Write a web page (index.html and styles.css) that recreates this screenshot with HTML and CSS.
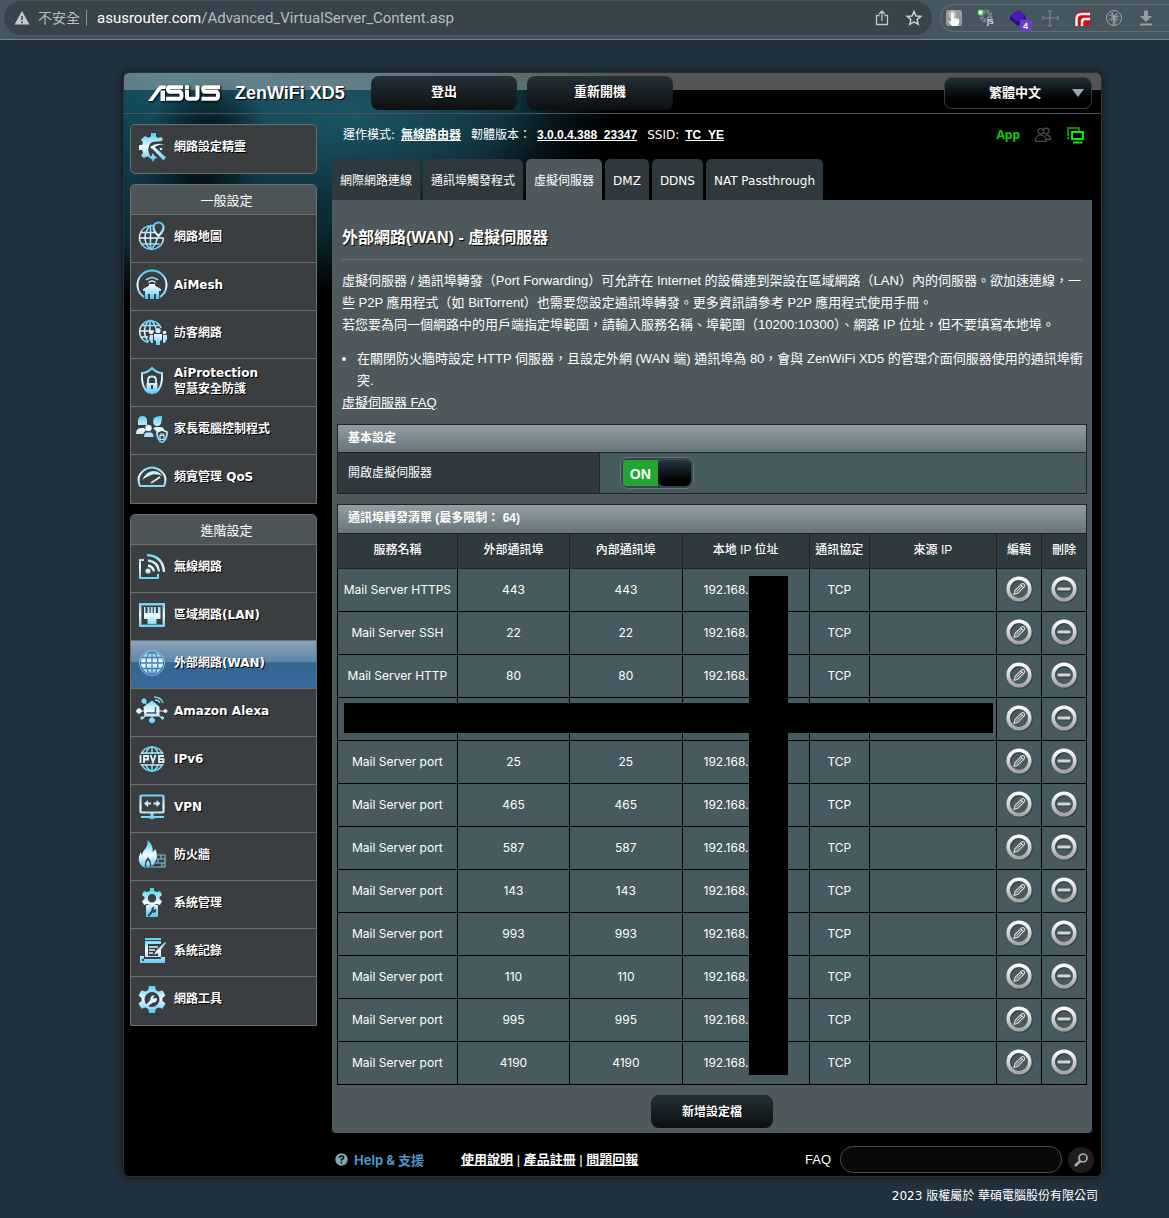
FILE: index.html
```html
<!DOCTYPE html>
<html lang="zh-Hant">
<head>
<meta charset="utf-8">
<title>ZenWiFi XD5 - 虛擬伺服器</title>
<link rel="stylesheet" href="styles.css">
</head>
<body>
<svg class="defs" aria-hidden="true">
  <defs>
    <linearGradient id="ice" gradientUnits="userSpaceOnUse" x1="0" y1="2" x2="0" y2="30"><stop offset="0" stop-color="#4ccdf8"/><stop offset=".5" stop-color="#f2fbff"/><stop offset="1" stop-color="#4cc6f4"/></linearGradient>
    <linearGradient id="metal" x1="0" y1="0" x2="0" y2="1"><stop offset="0" stop-color="#fff"/><stop offset="1" stop-color="#a4a4a4"/></linearGradient>
    <symbol id="edit" viewBox="0 0 28 28"><circle cx="15" cy="15" r="10.8" fill="none" stroke="#26343a" stroke-width="4" opacity=".6"/><circle cx="14" cy="14" r="10.8" fill="none" stroke="url(#metal)" stroke-width="3.6"/><path d="M9 19.500l1.200-4.200 6-6q1.500-1.500 2.800-.2t.1 2.800l-6 6.200z" fill="#52656a" stroke="#dcdcd4" stroke-width="1.100"/><path d="M11.500 16.800l5.500-5.800M15.800 9.800l2.600 2.600" stroke="#dcdcd4"/></symbol>
    <symbol id="minus" viewBox="0 0 28 28"><circle cx="15" cy="15" r="10.800" fill="none" stroke="#26343a" stroke-width="4" opacity=".6"/><circle cx="14" cy="14" r="10.800" fill="none" stroke="url(#metal)" stroke-width="3.600"/><rect x="8" y="13.500" width="13" height="3" fill="#29363a"/><rect x="7.500" y="12.500" width="13" height="3" rx="1" fill="#d4d4d4"/></symbol>
    <symbol id="gear" viewBox="0 0 32 32"><path d="M13 3h6l.8 4 2.800 1.500 3.900-1.300 3 5.200-3.100 2.700v2.800l3.100 2.700-3 5.200-3.900-1.300-2.800 1.500-.8 4h-6l-.8-4-2.800-1.500-3.900 1.300-3-5.200 3.100-2.700v-2.800L2.500 12.400l3-5.200 3.900 1.300L12.200 7zM16 9a7.500 7.500 0 1 0 0 15 7.500 7.500 0 0 0 0-15z" fill="url(#ice)" fill-rule="evenodd"/></symbol>
    <symbol id="globe" viewBox="0 0 32 32"><g fill="none" stroke="url(#ice)" stroke-width="1.500"><circle cx="16" cy="16" r="12"/><ellipse cx="16" cy="16" rx="7" ry="12"/><path d="M16 4v24.010M4 16h24v.01M5.500 10h21v.01M5.500 22h21v.01"/></g></symbol>
    <symbol id="globe-solid" viewBox="0 0 32 32"><circle cx="16" cy="16" r="11" fill="url(#ice)"/><g fill="none" stroke="#4d7dab" stroke-width="1.300"><ellipse cx="16" cy="16" rx="6" ry="11"/><path d="M16 5v22M5 16h22M6 10.500h20M6 21.500h20"/></g><circle cx="16" cy="16" r="12.500" fill="none" stroke="#9fc8e8" stroke-width=".8"/></symbol>
  </defs>
</svg>

<header class="browser">
  <div class="address">
    <svg class="warn" viewBox="0 0 16 16"><path d="M8 1l7.500 13.500H.5z" fill="#c4c9cd"/><path d="M8 6v4M8 11.500v1.800" stroke="#38424a" stroke-width="1.600"/></svg>
    <span class="insecure">不安全</span>
    <span class="url"><b>asusrouter.com</b>/Advanced_VirtualServer_Content.asp</span>
    <svg class="bar-icon" viewBox="0 0 18 18"><path d="M6.500 6.500h-3v9h11v-9h-3M9 12V2.500M6 5l3-3 3 3" fill="none" stroke="#c4c9cd" stroke-width="1.300"/></svg>
    <svg class="bar-icon" viewBox="0 0 18 18"><path d="M9 2.500l2 4.500 4.800.4-3.700 3.200 1.200 4.800L9 12.900l-4.300 2.500 1.200-4.800L2.200 7.400 7 7z" fill="none" stroke="#d0d4d7" stroke-width="1.400"/></svg>
  </div>
  <div class="extensions">
    <svg viewBox="0 0 20 20"><rect x="2" y="2" width="16" height="16" rx="2" fill="#999"/><circle cx="8.500" cy="6.500" r="4" fill="#bbb"/><path d="M7 5.500q1.500-2 3 0V10l5 1q1 3-1 7H8l-4-5 3 .5z" fill="#f5f7f7"/></svg>
    <svg viewBox="0 0 20 20"><circle cx="10" cy="8" r="4.500" fill="none" stroke="#7d8587" stroke-width="4" stroke-dasharray="2.500 1"/><rect x="2" y="2" width="5" height="5" rx="1" fill="#d8ffd0" stroke="#35b535"/><text x="11" y="16" class="js">js</text></svg>
    <svg viewBox="0 0 20 20"><path d="M10 2l8 6.500v3L10 18l-8-6.500v-3z" fill="#2c0c83"/><path d="M10 2l8 6-8 6-8-6z" fill="#4e16b5"/><rect x="12" y="11.500" width="12" height="12" rx="2" fill="#6940bd"/><text x="15" y="21" class="count">4</text></svg>
    <svg viewBox="0 0 20 20"><path d="M10 3v5M10 12v6M3 10h5M12 10h6M8 3h4M8 18h4M3 8v4M18 8v4M10 8v4M8 10h4" stroke="#7d8485" stroke-width="1.200" fill="none"/></svg>
    <svg viewBox="0 0 20 20"><path d="M3 18V9q0-6 7-6h8v15z" fill="#d40e17"/><path d="M4.500 18v-7q0-5 5.500-5h8M10 18v-4q0-3 3-3h5" fill="none" stroke="#f4f4f4" stroke-width="2.500"/></svg>
    <svg viewBox="0 0 20 20"><path d="M9 17l1-8 1 8M10 9L5 7M10 9L8 4M10 9l3-4M10 9l5-1M10 9l-5 3M10 9l5 3M7 5l6 9M13 6l-6 7" stroke="#9ca2a4" fill="none"/><circle cx="10" cy="10" r="7.500" fill="none" stroke="#9ca2a4"/></svg>
    <svg viewBox="0 0 20 20"><path d="M8 2.500h4V8h4l-6 6-6-6h4zM4 15.500h12v2H4z" fill="#989c9d"/></svg>
  </div>
</header>

<div class="page">
<div class="router">
  <header class="top">
    <svg class="logo" viewBox="0 0 72 16" role="img" aria-label="ASUS"><path d="M0 16L11.500.5H18L17.500 4h-4L4.500 16zM12.500 5.500H17V16h-4.500z" fill="#fff"/><g fill="none" stroke="#fff" stroke-width="4"><path d="M35 2.300H21.500q-1.500 0-1.500 1.700 0 2.700 2 2.700h9.500q2 0 2 3.500t-2 3.600H18"/><path d="M39 5v6.500q0 2.300 2.500 2.300H47q2.500 0 2.500-2.300V.5M37 2.300h4" /><path d="M72 2.300H57q-1.800 0-1.800 1.700 0 2.700 2 2.700H68q2 0 2 3.500t-2 3.600H53.500"/></g></svg>
    <h1 class="model">ZenWiFi XD5</h1>
    <div class="actions"><button class="btn">登出</button><button class="btn">重新開機</button></div>
    <div class="language"><select aria-label="語言"><option>繁體中文</option></select><span class="arrow"></span></div>
  </header>
  <div class="body">
    <nav class="side">
      <div class="group wizard">
        <a href="#"><svg viewBox="0 0 32 32"><g fill="url(#ice)"><path d="M12.500 17a6.500 6.500 0 0 1 7-6.500q3 0 5.500-.5l2-1-1.500-3-3.500 1-2-1.500V2h-5v3.500l-3 1.200-3-1.700L5 8.500l2 3L6 14H3v5h3l1 3-2 2.500L7.500 27l4-1.500 3 1-1-3q-2-3-1-6.500z"/><path d="M18 15.500l12 11-2.500 3L16 17.500z"/><path d="M14 16q6-5 15-2.500-8-.5-13 4.500z"/><path d="M17 22l1.500 3 3 1.500-3 1.500-1.500 3-1.500-3-3-1.500 3-1.500z"/><circle cx="25" cy="18" r="1.300"/></g></svg><span>網路設定精靈</span></a>
      </div>
      <div class="group">
        <h2>一般設定</h2>
        <a href="#"><svg viewBox="0 0 32 32"><g fill="none" stroke="url(#ice)" stroke-width="1.500"><path d="M17 4.500A12 12 0 1 0 27.500 17M14 4.500q-5 6-5 12t5 11.500M15 28q6-5 6-11M14.500 4v24M4 11.500h15M3.500 17h24M5.500 23h18"/><path d="M22.500 15q-5-5-5-8.500a5 5 0 0 1 10 0q0 3.500-5 8.500z" fill="#3a3e40" stroke-width="2.200"/></g></svg><span>網路地圖</span></a>
        <a href="#"><svg viewBox="0 0 32 32"><path d="M8 28A14.500 14.500 0 1 1 24 28" fill="none" stroke="url(#ice)" stroke-width="2"/><path d="M9 30v-8H7v-2l9-5 9 5v2h-2v8h-3v-5h-2v5h-4v-5h-2v5zM13 15h6v3h-6z" fill="url(#ice)"/><path d="M10 11q6-5 12 0M12.500 13.500q3.500-3 7 0" fill="none" stroke="url(#ice)" stroke-width="1.600"/></svg><span>AiMesh</span></a>
        <a href="#"><svg viewBox="0 0 32 32"><g fill="none" stroke="url(#ice)" stroke-width="1.500"><path d="M12 25.500A11 11 0 1 1 25 11M13.500 3q-5 5-5 11t4 11M14 3v14M14 3q5 3 6 9M3 14h15M5 8.500h18M4 20h8"/></g><g fill="url(#ice)"><circle cx="22" cy="13.500" r="2.600"/><path d="M18 17h8v6l-2 1v4h-4v-4l-2-1z"/><circle cx="15.500" cy="15.500" r="1.800"/><path d="M14 18h3v8h-2l-2-4z"/><circle cx="28.500" cy="15.500" r="1.800"/><path d="M27 18h4v4l-2 4h-2z"/></g></svg><span>訪客網路</span></a>
        <a href="#"><svg viewBox="0 0 32 32"><path d="M13 28q-8-5-7-20 5 0 10-5 5 5 10 5 1 15-7 20" fill="none" stroke="url(#ice)" stroke-width="2"/><path d="M12 18v-3q0-3.500 4-3.500t4 3.500v3" fill="none" stroke="url(#ice)" stroke-width="1.800"/><path d="M10.500 18h11v9l-5.500 2.500-5.500-2.500zM15 20v4h2v-4z" fill="url(#ice)" fill-rule="evenodd"/></svg><span>AiProtection<br>智慧安全防護</span></a>
        <a href="#"><svg viewBox="0 0 32 32"><g fill="url(#ice)"><path d="M2 12V8q0-5 4.500-5T11 8v4zM17 8q0-5 9-5 0 10-4.500 10Q17 13 17 8zM0 21q0-6 5-6h3l2 2-3 4zM17 15l3-1h4q4 0 4 3l-6 3z"/><circle cx="12.500" cy="15" r="3.200"/><path d="M8 24q0-4.500 3-4.500h3.500q3 0 3 4.500z"/></g><path d="M26 17l5 2q0 8-5 10.500-5-2.500-5-10.500z" fill="#3b3f41" stroke="url(#ice)" stroke-width="1.800"/><path d="M24.500 22.500v-1.500h3v1.500M24 22.500h4v4h-4z" fill="none" stroke="#bdeeff" stroke-width="1.200"/></svg><span>家長電腦控制程式</span></a>
        <a href="#"><svg viewBox="0 0 32 32"><g fill="none" stroke="url(#ice)" stroke-width="2"><path d="M4 25q-4-9 3-15 9-7 18 0 7 6 3 15z"/><path d="M15 22l9-6" stroke-width="1.600"/></g><path d="M6 19q5-10 13-9 5 1 7 5-8-5-20 4z" fill="url(#ice)"/></svg><span>頻寬管理 QoS</span></a>
      </div>
      <div class="group">
        <h2>進階設定</h2>
        <a href="#"><svg viewBox="0 0 32 32"><g fill="none" stroke="url(#ice)" stroke-width="2"><path d="M8 9H4v18h18v-4"/><path d="M11 4q16 1 17 17M12 9.500q10 1 11 11M12 14.500q5 1 6 6" stroke-width="2.400"/></g><circle cx="12" cy="20" r="2.600" fill="url(#ice)"/></svg><span>無線網路</span></a>
        <a href="#"><svg viewBox="0 0 32 32"><rect x="4.200" y="5.200" width="23.600" height="21.600" fill="none" stroke="url(#ice)" stroke-width="2.400"/><path d="M8 8h1.500v6h2V8h2v6h1.200V8h2v6h1.200V8h2v6h2V8H24.500v12h-4v5h-9v-5h-3.500z" fill="url(#ice)"/></svg><span>區域網路(LAN)</span></a>
        <a href="#" class="active"><svg><use href="#globe-solid"/></svg><span>外部網路(WAN)</span></a>
        <a href="#"><svg viewBox="0 0 32 32"><g fill="url(#ice)" stroke="url(#ice)"><path d="M8 12l8-6 7 6v9H9z"/><path d="M3 16h26v.01M8 6l4 5M7 23l4-4M16 20v6M26 23l-5-4" stroke-width="1.200"/><circle cx="3" cy="16" r="2.300"/><circle cx="29.500" cy="16" r="1.500"/><circle cx="8" cy="6" r="2.200"/><circle cx="16" cy="25.500" r="2.500"/><circle cx="6" cy="23" r="1.200"/><circle cx="26.500" cy="23" r="1.200"/></g><path d="M18 2q7 0 9 6M19 5q4 0 5 3" fill="none" stroke="#76dafd" stroke-width="1.300"/><path d="M10.500 18h10M19.500 12v6" stroke="#43555c" stroke-width="1.500"/></svg><span>Amazon Alexa</span></a>
        <a href="#"><svg viewBox="0 0 32 32"><use href="#globe"/><rect x="2" y="11" width="28" height="10" fill="#3b3f41"/><path d="M4.500 12v8M8 20v-7h4v3.500H8M14.500 12l2.500 7 2.500-7M28 13h-5v6.200h4.500v-3h-4.500" fill="none" stroke="#dff6ff" stroke-width="1.800"/></svg><span>IPv6</span></a>
        <a href="#"><svg viewBox="0 0 32 32"><rect x="4.500" y="4.500" width="23" height="17" rx="1" fill="none" stroke="url(#ice)" stroke-width="2.200"/><path d="M8 12.500l4-3.500v2.500h3v2h-3V16zM24.500 12.500l-4-3.500v2.500h-3v2h3V16zM14.500 22h3v3H28v2h-9l-3 1.500-3-1.500H5v-2h9.500z" fill="url(#ice)"/></svg><span>VPN</span></a>
        <a href="#"><svg viewBox="0 0 32 32"><path d="M7 28Q0 23 4.500 13l1.500 3q1-4 3-6 3-3 2.500-9 6 5 5 12l3-3q3 8 0 12-1 4-4 5l-1-5-2.500-4-2.500 4-1 6z" fill="url(#ice)"/><path d="M12 21q4 6 0 7-4-2 0-7z" fill="url(#ice)"/><path d="M20 16h9v12H8M21 20h8M19 24h10M25 16v4M22 20v4M26 24v4" fill="none" stroke="#79bcd8" stroke-width="1.200"/></svg><span>防火牆</span></a>
        <a href="#"><svg viewBox="0 0 32 32"><path d="M14 1h4v3l3 1 3-1 2 4-2.500 2v2L26 14l-2 4-3-1-3 1h-4l-3-1-3 1-2-4 2.500-2v-2L6 8l2-4 3 1 3-1zM16 7a4.200 4.200 0 1 0 0 8.400A4.200 4.200 0 0 0 16 7z" fill="url(#ice)" fill-rule="evenodd"/><rect x="10" y="18" width="12" height="12" rx="1" fill="url(#ice)"/><path d="M11.500 28.500l4-5q-1-3 3-4l-1 3h3q0 4-4 3l-3 4z" fill="#36444a"/></svg><span>系統管理</span></a>
        <a href="#"><svg viewBox="0 0 32 32"><g fill="url(#ice)"><path d="M9 3h16v2H9zM9 6h16v3H12v12h10v-5l3-3v9H9zM4 21h4v3h17v-2h4v6H4z"/><path d="M29 7l-9 9-2 4 4-2 8-10z"/></g><path d="M13 12h9M13 15h6M13 18h4" stroke="#dff7ff" stroke-width="1.500"/><circle cx="7" cy="25" r="1.200" fill="#3a4a50"/></svg><span>系統記錄</span></a>
        <a href="#"><svg viewBox="0 0 32 32"><use href="#gear"/><path d="M10 22l4.500-5q-1-4 4-5l-1.500 3.500 4-.5q0 5-4 4.500L12 23z" fill="#d9f5ff"/></svg><span>網路工具</span></a>
      </div>
    </nav>
    <main>
      <div class="status">
        <span>運作模式:</span><a href="#">無線路由器</a><span class="label">韌體版本：</span><a href="#">3.0.0.4.388_23347</a><span class="label">SSID:</span><a href="#">TC_YE</a>
        <div class="indicators"><span class="app">App</span>
          <svg viewBox="0 0 20 18"><g fill="none" stroke="#494949" stroke-width="1.400"><circle cx="7.500" cy="5" r="3"/><circle cx="13.500" cy="4.500" r="3"/><path d="M1.500 16q0-6 5-7h2q5 1 5 7zM13 9q5 0 5.500 5H14"/></g></svg>
          <svg viewBox="0 0 18 18"><path d="M2 10V2h11v3" fill="none" stroke="#078a07" stroke-width="2"/><path d="M1 11h2.500v2.500H1z" fill="#078a07"/><rect x="6" y="6" width="11" height="7" fill="none" stroke="#00f000" stroke-width="2"/><path d="M7 16.500h9.500" stroke="#00f000" stroke-width="2"/></svg>
        </div>
      </div>
      <nav class="tabs"><a href="#">網際網路連線</a><a href="#">通訊埠觸發程式</a><a href="#" class="current">虛擬伺服器</a><a href="#">DMZ</a><a href="#">DDNS</a><a href="#">NAT Passthrough</a></nav>
      <section class="panel">
        <h2 class="title">外部網路(WAN) - 虛擬伺服器</h2>
        <div class="intro">
          <p>虛擬伺服器 / 通訊埠轉發（Port Forwarding）可允許在 Internet 的設備連到架設在區域網路（LAN）內的伺服器。欲加速連線，一些 P2P 應用程式（如 BitTorrent）也需要您設定通訊埠轉發。更多資訊請參考 P2P 應用程式使用手冊。<br>若您要為同一個網路中的用戶端指定埠範圍，請輸入服務名稱、埠範圍（10200:10300）、網路 IP 位址，但不要填寫本地埠。</p>
          <ul><li>在關閉防火牆時設定 HTTP 伺服器，且設定外網 (WAN 端) 通訊埠為 80，會與 ZenWiFi XD5 的管理介面伺服器使用的通訊埠衝突.</li></ul>
          <a href="#">虛擬伺服器 FAQ</a>
        </div>
        <div class="basic">
          <h3 class="bar">基本設定</h3>
          <div class="setting">
            <label for="vs">開啟虛擬伺服器</label>
            <div class="value"><span class="toggle"><input type="checkbox" id="vs" checked><span class="on">ON</span><span class="knob"></span></span></div>
          </div>
        </div>
        <div class="rules">
          <table>
            <caption class="bar">通訊埠轉發清單 (最多限制： 64)</caption>
            <colgroup><col class="c-name"><col class="c-port"><col class="c-port"><col class="c-ip"><col class="c-proto"><col class="c-source"><col class="c-act"><col class="c-act"></colgroup>
            <thead><tr><th>服務名稱</th><th>外部通訊埠</th><th>內部通訊埠</th><th>本地 IP 位址</th><th>通訊協定</th><th>來源 IP</th><th>編輯</th><th>刪除</th></tr></thead>
            <tbody>
              <tr><td>Mail Server HTTPS</td><td>443</td><td>443</td><td class="ip">192.168.</td><td>TCP</td><td></td><td><button aria-label="編輯"><svg><use href="#edit"/></svg></button></td><td><button aria-label="刪除"><svg><use href="#minus"/></svg></button></td></tr>
              <tr><td>Mail Server SSH</td><td>22</td><td>22</td><td class="ip">192.168.</td><td>TCP</td><td></td><td><button aria-label="編輯"><svg><use href="#edit"/></svg></button></td><td><button aria-label="刪除"><svg><use href="#minus"/></svg></button></td></tr>
              <tr><td>Mail Server HTTP</td><td>80</td><td>80</td><td class="ip">192.168.</td><td>TCP</td><td></td><td><button aria-label="編輯"><svg><use href="#edit"/></svg></button></td><td><button aria-label="刪除"><svg><use href="#minus"/></svg></button></td></tr>
              <tr><td></td><td></td><td></td><td></td><td></td><td></td><td><button aria-label="編輯"><svg><use href="#edit"/></svg></button></td><td><button aria-label="刪除"><svg><use href="#minus"/></svg></button></td></tr>
              <tr><td>Mail Server port</td><td>25</td><td>25</td><td class="ip">192.168.</td><td>TCP</td><td></td><td><button aria-label="編輯"><svg><use href="#edit"/></svg></button></td><td><button aria-label="刪除"><svg><use href="#minus"/></svg></button></td></tr>
              <tr><td>Mail Server port</td><td>465</td><td>465</td><td class="ip">192.168.</td><td>TCP</td><td></td><td><button aria-label="編輯"><svg><use href="#edit"/></svg></button></td><td><button aria-label="刪除"><svg><use href="#minus"/></svg></button></td></tr>
              <tr><td>Mail Server port</td><td>587</td><td>587</td><td class="ip">192.168.</td><td>TCP</td><td></td><td><button aria-label="編輯"><svg><use href="#edit"/></svg></button></td><td><button aria-label="刪除"><svg><use href="#minus"/></svg></button></td></tr>
              <tr><td>Mail Server port</td><td>143</td><td>143</td><td class="ip">192.168.</td><td>TCP</td><td></td><td><button aria-label="編輯"><svg><use href="#edit"/></svg></button></td><td><button aria-label="刪除"><svg><use href="#minus"/></svg></button></td></tr>
              <tr><td>Mail Server port</td><td>993</td><td>993</td><td class="ip">192.168.</td><td>TCP</td><td></td><td><button aria-label="編輯"><svg><use href="#edit"/></svg></button></td><td><button aria-label="刪除"><svg><use href="#minus"/></svg></button></td></tr>
              <tr><td>Mail Server port</td><td>110</td><td>110</td><td class="ip">192.168.</td><td>TCP</td><td></td><td><button aria-label="編輯"><svg><use href="#edit"/></svg></button></td><td><button aria-label="刪除"><svg><use href="#minus"/></svg></button></td></tr>
              <tr><td>Mail Server port</td><td>995</td><td>995</td><td class="ip">192.168.</td><td>TCP</td><td></td><td><button aria-label="編輯"><svg><use href="#edit"/></svg></button></td><td><button aria-label="刪除"><svg><use href="#minus"/></svg></button></td></tr>
              <tr><td>Mail Server port</td><td>4190</td><td>4190</td><td class="ip">192.168.</td><td>TCP</td><td></td><td><button aria-label="編輯"><svg><use href="#edit"/></svg></button></td><td><button aria-label="刪除"><svg><use href="#minus"/></svg></button></td></tr>
            </tbody>
          </table>
          <div class="mask mask-row"></div>
          <div class="mask mask-column"></div>
        </div>
        <button class="btn add">新增設定檔</button>
      </section>
      <footer class="support">
        <svg class="q" viewBox="0 0 14 14"><circle cx="7" cy="7" r="6.700" fill="#7fa6b3"/><path d="M4.800 5.500q0-2.300 2.300-2.300t2.200 1.900Q9.300 6.300 7 7v1.300M7 9.500v1.700" fill="none" stroke="#101517" stroke-width="1.700"/></svg>
        <a class="help" href="#">Help &amp; 支援</a>
        <span class="links"><a href="#">使用說明</a> | <a href="#">產品註冊</a> | <a href="#">問題回報</a></span>
        <label for="faq">FAQ</label><input id="faq" type="text">
        <button class="search" aria-label="搜尋"><svg viewBox="0 0 16 16"><circle cx="10" cy="6" r="4" fill="#252525" stroke="#aaa" stroke-width="1.700"/><path d="M7 9l-5 5" stroke="#aaa" stroke-width="2.600"/></svg></button>
      </footer>
    </main>
  </div>
</div>
<p class="copyright">2023 版權屬於 華碩電腦股份有限公司</p>
</div>
</body>
</html>
```
FILE: styles.css
```css
* { box-sizing: border-box; }
body {
  margin: 0;
  background: #21323e;
  color: #fff;
  font: 12px/16px "Liberation Sans", "Noto Sans CJK TC", sans-serif;
}
h1, h2, h3, p, ul { margin: 0; }
a { color: inherit; }
button, input, select { font: inherit; color: inherit; }
svg { flex: none; overflow: visible; }
.defs { position: absolute; width: 0; height: 0; }

/* browser toolbar */
.browser {
  display: flex;
  gap: 8px;
  height: 40px;
  padding: 1px 0 4px 4px;
  overflow: hidden;
  background: #46565f;
  border-bottom: 1px solid #72818a;
}
.address {
  flex: 1;
  display: flex;
  align-items: center;
  height: 34px;
  padding: 0 9px 0 10px;
  border-radius: 17px;
  background: #38444b;
  font: 14px/20px Roboto, "Noto Sans CJK TC", sans-serif;
  color: #b6bcc0;
}
.warn { width: 16px; height: 16px; margin-right: 8px; }
.insecure { padding-right: 6px; border-right: 1px solid #8a9398; line-height: 16px; }
.url { flex: 1; margin-left: 10px; font-size: 15px; }
.url b { font-weight: 400; color: #fff; }
.bar-icon { width: 18px; height: 18px; margin-left: 14px; }
.extensions {
  display: flex;
  align-items: center;
  gap: 12px;
  width: 229px;
  height: 28px;
  margin-top: 3px;
  padding-left: 3px;
  border: 1px solid #5d6e77;
  border-right: 0;
  border-radius: 14px 0 0 14px;
}
.extensions svg { width: 20px; height: 20px; }
.js { font: 9px "Liberation Sans", sans-serif; fill: #fff; }
.count { font: bold 9px "Liberation Sans", sans-serif; fill: #fff; }

/* router shell */
.page { padding: 32px 67px 0 123px; }
.router {
  border: 1px solid #2d2f30;
  border-radius: 6px;
  overflow: hidden;
  box-shadow: 0 0 8px #0b1318;
  background:
    radial-gradient(ellipse 60px 60px at 85px 60px, rgba(3, 10, 15, .9), transparent),
    radial-gradient(ellipse 60px 50px at 75px 110px, rgba(3, 10, 15, .8), transparent),
    radial-gradient(ellipse 200px 90px at 230px 40px, rgba(35, 95, 112, .7), transparent),
    radial-gradient(ellipse 440px 230px at 60px 0, #17596c 0, #103c4b 35%, #0c2a33 75%, transparent 100%),
    #000;
}
.top {
  display: flex;
  align-items: center;
  height: 41px;
  padding: 0 9px 0 24px;
  border-bottom: 1px solid #4a545c;
  background: linear-gradient(rgba(184, 184, 184, .46) 17px, transparent 17px);
}
.logo { width: 72px; height: 16px; filter: drop-shadow(1px 1px 1px #000); }
.model { width: 111px; margin-left: 15px; font-size: 18px; line-height: 24px; text-shadow: 1px 1px 1px #000; white-space: nowrap; }
.actions { display: flex; gap: 10px; margin-left: 25px; }
.btn {
  width: 146px;
  height: 34px;
  padding: 0 0 2px;
  border: 0;
  border-radius: 8px;
  background: linear-gradient(#233137, #0d0f10);
  font-size: 13px;
  font-weight: 700;
  text-shadow: 1px 1px 1px #000;
}
.language { position: relative; width: 148px; height: 32px; margin-left: auto; }
.language select {
  appearance: none;
  width: 100%;
  height: 100%;
  padding: 0 6px 0 0;
  border: 1px solid #373d3f;
  border-radius: 8px;
  background: linear-gradient(#223136, #000 70%);
  font-size: 13px;
  font-weight: 700;
  text-align-last: center;
}
.arrow {
  position: absolute;
  right: 8px;
  top: 12px;
  border: 6px solid transparent;
  border-top: 8px solid #91a9ba;
  border-bottom: 0;
  pointer-events: none;
}
.body { display: flex; gap: 15px; padding: 10px 9px 0 6px; }

/* side menu */
.side { flex: none; width: 187px; }
.group {
  margin-bottom: 10px;
  border: 1px solid #6b7071;
  border-radius: 5px 5px 0 0;
  background: #3a3e40;
  overflow: hidden;
}
.group h2 {
  height: 29px;
  background: #4d5558;
  font-size: 13px;
  font-weight: 400;
  line-height: 31px;
  padding-left: 6px;
  text-align: center;
}
.group a {
  display: flex;
  align-items: center;
  gap: 6px;
  height: 48px;
  padding: 0 0 4px 5px;
  border-top: 1px solid #6b7071;
  font: bold 12px/16px "DejaVu Sans", "Noto Sans CJK TC", sans-serif;
  text-decoration: none;
  text-shadow: 1px 1px 0 #000;
}
.group a svg { width: 32px; height: 32px; }
.group a:last-child { height: 49px; padding-bottom: 5px; }
.wizard { border-radius: 5px; }
.wizard a:last-child { height: 48px; border-top: 0; padding-bottom: 4px; }
.group .active { background: linear-gradient(#8aa3b9, #5f86a8 45%, #34648f 46%, #3a6b9c); }

/* content */
main { flex: 1; min-width: 0; }
.status {
  display: flex;
  align-items: center;
  height: 22px;
  padding: 0 8px 0 11px;
  font-family: "DejaVu Sans", "Noto Sans CJK TC", sans-serif;
  white-space: nowrap;
}
.status a { margin-left: 6px; font-family: "Liberation Sans", "Noto Sans CJK TC", sans-serif; font-weight: 700; }
.label { margin-left: 10px; }
.indicators { display: flex; align-items: center; gap: 14px; margin-left: auto; }
.indicators svg { width: 18px; height: 18px; }
.app { color: #00cf00; font-family: "Noto Sans", sans-serif; font-size: 12px; font-weight: 700; }
.tabs { display: flex; gap: 3px; margin-top: 13px; }
.tabs a {
  height: 41px;
  padding: 0 8px;
  border-radius: 5px 5px 0 0;
  background: #2f393d;
  font: 12px/45px "DejaVu Sans", "Noto Sans CJK TC", sans-serif;
  text-decoration: none;
  white-space: nowrap;
}
.tabs .current { background: #4d595d; }
.panel {
  display: flex;
  flex-direction: column;
  padding: 24px 5px 5px;
  border-radius: 0 0 4px 4px;
  background: #4d595d;
}
.title {
  margin: 0 5px;
  height: 36px;
  border-bottom: 1px solid #6b7577;
  font-size: 16px;
  line-height: 28px;
  text-shadow: 1px 1px 1px #000;
}
.intro { padding: 10px 4px 0 5px; font-size: 13px; line-height: 22px; }
.intro ul { margin: 12px 0 0; padding-left: 15px; }
.basic { margin-top: 10px; border: 1px solid #222; }
.bar {
  height: 28px;
  padding-left: 10px;
  background: linear-gradient(#929ea2, #66757c);
  font-size: 12px;
  font-weight: 700;
  line-height: 27px;
  text-align: left;
}
.basic .bar { border-bottom: 1px solid #222; }
.setting { display: flex; height: 40px; }
.setting label { width: 35%; padding-left: 10px; border-right: 1px solid #222; background: #2f3a3e; line-height: 40px; }
.value { flex: 1; padding: 4px 20px; background: #475a5f; }
.toggle {
  position: relative;
  display: flex;
  width: 74px;
  height: 32px;
  padding: 2px;
  border: 1px solid #64757a;
  border-radius: 8px;
  background: #35464a;
}
.toggle input { position: absolute; inset: 0; width: 100%; height: 100%; margin: 0; opacity: 0; }
.on { width: 35px; border-radius: 3px 0 0 3px; background: #22a532; font-size: 14px; font-weight: 700; line-height: 28px; text-align: center; }
.knob { flex: 1; border-radius: 6px; background: linear-gradient(#233640, #000 80%); }
.rules { position: relative; margin-top: 10px; }
table { width: 100%; table-layout: fixed; border-collapse: collapse; }
caption.bar { height: 29px; border: 1px solid #222; border-bottom: 0; }
.c-name { width: 16%; }
.c-port { width: 15%; }
.c-ip { width: 17%; }
.c-proto { width: 8%; }
.c-source { width: 17%; }
.c-act { width: 6%; }
th, td { padding: 0; border: 1px solid #000; text-align: center; }
th { height: 35px; padding-bottom: 2px; border-color: #222; background: #2f3a3e; font-weight: 500; }
td { height: 43px; background: #475a5f; font: 12px/16px Inter, sans-serif; }
.ip { padding-left: 21px; text-align: left; }
td button { display: block; width: 28px; height: 28px; margin: 0 auto 2px; padding: 0; border: 0; background: none; }
td svg { display: block; width: 28px; height: 28px; }
.mask { position: absolute; background: #000; }
.mask-row { left: 7px; right: 94px; top: 199px; height: 30px; }
.mask-column { left: 412px; width: 39px; top: 72px; bottom: 10px; }
.add { align-self: center; width: 122px; height: 33px; margin-top: 10px; padding: 0; font-size: 12px; }

/* footer */
.support { display: flex; align-items: center; height: 43px; padding: 10px 0 0 3px; font-size: 13px; }
.q { width: 13px; height: 13px; }
.help { margin-left: 6px; color: #4e96c5; font-family: Inter, "Noto Sans CJK TC", sans-serif; font-weight: 700; text-decoration: none; }
.links { margin-left: 37px; }
.links a { font-weight: 700; }
.support label { margin-left: auto; }
.support input { width: 222px; height: 27px; margin: 0 6px 0 9px; padding: 0 12px; border: 1px solid #4a4a4a; border-radius: 13px; background: #090909; }
.search { width: 26px; height: 26px; padding: 5px; margin-right: -2px; border: 0; border-radius: 50%; background: #1d1d1d; }
.search svg { display: block; width: 16px; height: 16px; }
.copyright { padding: 11px 4px 14px 0; font-family: "DejaVu Sans", "Noto Sans CJK TC", sans-serif; text-align: right; }
```
